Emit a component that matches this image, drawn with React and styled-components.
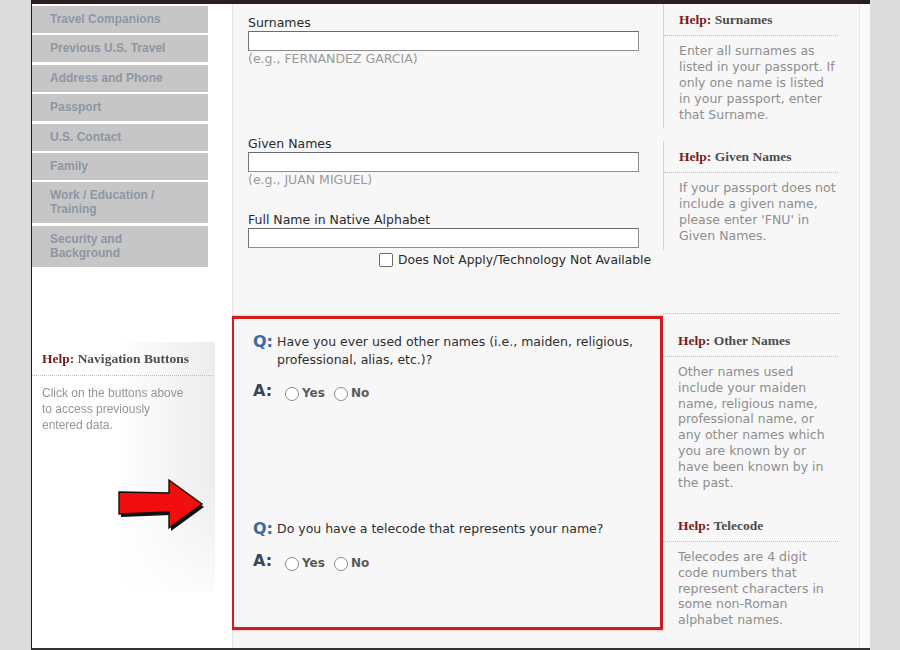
import styled, { createGlobalStyle } from 'styled-components'

const GlobalStyle = createGlobalStyle`
  html, body {
    margin: 0;
    padding: 0;
    background: #dcdcdc;
    height: 650px;
    overflow: hidden;
  }
  * { box-sizing: border-box; }
`

const Page = styled.div`
  position: relative;
  display: flex;
  width: 839px;
  height: 650px;
  margin-left: 31px;
  background: #fff;
  border-left: 1px solid #1a1a1a;
  border-top: 4px solid #2b1f1f;
  border-bottom: 2px solid #333;
`

const Sidebar = styled.aside`
  position: relative;
  width: 200px;
  flex-shrink: 0;
  padding-top: 2px;
  background: #fff;
`

const NavList = styled.nav`
  display: flex;
  flex-direction: column;
  gap: 2.4px;
  width: 176px;
`

const NavButton = styled.div`
  min-height: 27px;
  padding: 6px 10px 7px 18px;
  background: #c6c6c6;
  color: #8d97a5;
  font: bold 12px/14px "Liberation Sans", Arial, sans-serif;
`

const NavHelp = styled.div`
  width: 183px;
  height: 250px;
  margin-top: 75px;
  background: linear-gradient(90deg, rgba(255,255,255,1) 45%, rgba(236,236,236,1) 100%);
  -webkit-mask-image: linear-gradient(180deg, #000 55%, rgba(0,0,0,0.2) 100%);
`

const HelpTitle = styled.div`
  padding: ${p => p.$pad || '8px 0 7px 15px'};
  border-bottom: 1px dotted #bdbdbd;
  margin-right: 2px;
  font: bold 13.5px/16px "Liberation Serif", "Times New Roman", serif;
  color: #4d4d4d;
  white-space: nowrap;

  b { color: #7a1c1c; }
`

const NavHelpText = styled.div`
  padding: 9px 0 0 10px;
  font: 12px/16px "Liberation Sans", Arial, sans-serif;
  color: #959595;
`

const Arrow = styled.svg`
  position: absolute;
  left: 83px;
  top: 472px;
`

const Main = styled.main`
  width: 431px;
  flex-shrink: 0;
  background: #f7f7f7;
  border-left: 1px solid #e4e4e4;
  font-family: "DejaVu Sans", Verdana, sans-serif;
`

const NameSection = styled.section`
  height: 312px;
  padding: 11px 0 0 15px;
`

const Field = styled.div`
  margin-top: ${p => p.$mt || 0}px;
`

const Label = styled.label`
  display: block;
  font-size: 12.5px;
  line-height: 16px;
  color: #2a2a2a;
`

const TextInput = styled.input`
  display: block;
  width: 391px;
  height: 20px;
  margin: 0;
  border: 1px solid #8e8e8e;
  border-top-color: #6c6c6c;
  border-left-color: #767676;
  background: #fff;
`

const Hint = styled.div`
  font-size: 12.5px;
  line-height: 15px;
  color: #9a9a9a;
`

const CheckRow = styled.label`
  display: flex;
  align-items: center;
  gap: 5px;
  margin: 4px 0 0 131px;
  font-size: 12.3px;
  line-height: 16px;
  color: #2a2a2a;
  white-space: nowrap;
`

const CheckBox = styled.input`
  appearance: none;
  width: 14px;
  height: 14px;
  margin: 0;
  border: 1px solid #6a6a6a;
  border-radius: 2px;
  background: #fff;
`

const QuestionBox = styled.section`
  height: 314px;
  margin-left: -2px;
  padding: 15px 10px 0 19px;
  border: 3px solid #cf1c1c;
  box-shadow: 0 0 2px rgba(207, 28, 28, 0.5);
`

const QRow = styled.div`
  display: flex;
  margin-top: ${p => p.$mt || 0}px;
`

const QMark = styled.span`
  width: 24px;
  flex-shrink: 0;
  font-weight: bold;
  font-size: 16px;
  line-height: 16px;
  color: #3d6aa3;
`

const QText = styled.div`
  font-size: 12.5px;
  line-height: 18px;
  color: #2e2e2e;
  margin-top: -1px;
`

const ARow = styled.div`
  display: flex;
  align-items: center;
  height: 20px;
  margin-top: ${p => p.$mt || 0}px;
`

const AMark = styled.span`
  width: 32px;
  flex-shrink: 0;
  font-weight: bold;
  font-size: 16px;
  color: #3a4556;
  align-self: flex-start;
`

const Radio = styled.input`
  appearance: none;
  width: 14px;
  height: 14px;
  margin: 3px 3px 0 0;
  border: 1px solid #8a8a8a;
  border-radius: 50%;
  background: #fff;
`

const RadioLabel = styled.label`
  display: flex;
  align-items: center;
  margin-right: 9px;
  font-size: 12px;
  font-weight: bold;
  color: #5a5a5a;
  padding-top: 3px;
`

const HelpColumn = styled.aside`
  width: 177px;
  flex-shrink: 0;
  background: #f7f7f7;
  font-family: "DejaVu Sans", Verdana, sans-serif;
`

const HelpBox = styled.div`
  height: ${p => p.$h}px;
  margin-top: ${p => p.$mt || 0}px;
  border-left: ${p => (p.$line ? '1px solid #d4d4d4' : 'none')};
  border-top: ${p => (p.$dotted ? '1px dotted #c4c4c4' : 'none')};
`

const HelpText = styled.div`
  padding: 7px 0 0 15px;
  font-size: 12.5px;
  line-height: ${p => p.$lh || 16}px;
  color: #8e8e8e;
  white-space: nowrap;
`

const Edge = styled.div`
  flex: 1;
  background: linear-gradient(90deg, #f6f6f6 0 19px, #e6e6e6 19px 20px, #fbfbfb 20px);
`

const navItems = [
  'Travel Companions',
  'Previous U.S. Travel',
  'Address and Phone',
  'Passport',
  'U.S. Contact',
  'Family',
  ['Work / Education /', 'Training'],
  ['Security and', 'Background'],
]

function Lines({ lines }) {
  return lines.map((l, i) => (
    <span key={i}>
      {l}
      {i < lines.length - 1 && <br />}
    </span>
  ))
}

function Answer({ name, mt }) {
  return (
    <ARow $mt={mt}>
      <AMark>A:</AMark>
      <RadioLabel>
        <Radio type="radio" name={name} />
        Yes
      </RadioLabel>
      <RadioLabel>
        <Radio type="radio" name={name} />
        No
      </RadioLabel>
    </ARow>
  )
}

function Help({ title, pad }) {
  return (
    <HelpTitle $pad={pad}>
      <b>Help:</b> {title}
    </HelpTitle>
  )
}

export default function App() {
  return (
    <>
      <GlobalStyle />
      <Page>
        <Sidebar>
          <NavList>
            {navItems.map((item, i) => (
              <NavButton key={i}>
                {Array.isArray(item) ? <Lines lines={item} /> : item}
              </NavButton>
            ))}
          </NavList>
          <NavHelp>
            <Help title="Navigation Buttons" pad="9px 0 8px 10px" />
            <NavHelpText>
              <Lines lines={['Click on the buttons above', 'to access previously', 'entered data.']} />
            </NavHelpText>
          </NavHelp>
          <Arrow width="92" height="60" viewBox="0 0 92 60">
            <polygon
              points="4,16 54,17 54,4 87,28 54,52 54,36 4,38"
              fill="#111"
              transform="translate(2,3)"
            />
            <polygon
              points="4,16 54,17 54,4 87,28 54,52 54,36 4,38"
              fill="#f00e0e"
              stroke="#111"
              strokeWidth="1.4"
            />
          </Arrow>
        </Sidebar>

        <Main>
          <NameSection>
            <Field>
              <Label>Surnames</Label>
              <TextInput type="text" />
              <Hint>(e.g., FERNANDEZ GARCIA)</Hint>
            </Field>
            <Field $mt={70}>
              <Label>Given Names</Label>
              <TextInput type="text" />
              <Hint>(e.g., JUAN MIGUEL)</Hint>
            </Field>
            <Field $mt={25}>
              <Label>Full Name in Native Alphabet</Label>
              <TextInput type="text" />
              <CheckRow>
                <CheckBox type="checkbox" />
                Does Not Apply/Technology Not Available
              </CheckRow>
            </Field>
          </NameSection>

          <QuestionBox>
            <QRow>
              <QMark>Q:</QMark>
              <QText>
                <Lines lines={['Have you ever used other names (i.e., maiden, religious,', 'professional, alias, etc.)?']} />
              </QText>
            </QRow>
            <Answer name="other" mt={12} />
            <QRow $mt={120}>
              <QMark>Q:</QMark>
              <QText>Do you have a telecode that represents your name?</QText>
            </QRow>
            <Answer name="telecode" mt={13} />
          </QuestionBox>
        </Main>

        <HelpColumn>
          <HelpBox $h={124} $line>
            <Help title="Surnames" />
            <HelpText>
              <Lines
                lines={[
                  'Enter all surnames as',
                  'listed in your passport. If',
                  'only one name is listed',
                  'in your passport, enter',
                  'that Surname.',
                ]}
              />
            </HelpText>
          </HelpBox>
          <HelpBox $h={109} $mt={13} $line>
            <Help title="Given Names" />
            <HelpText>
              <Lines
                lines={[
                  'If your passport does not',
                  'include a given name,',
                  "please enter 'FNU' in",
                  'Given Names.',
                ]}
              />
            </HelpText>
          </HelpBox>
          <HelpBox $h={197} $mt={63} $dotted>
            <Help title="Other Names" pad="19px 0 7px 15px" />
            <HelpText $lh={15.8}>
              <Lines
                lines={[
                  'Other names used',
                  'include your maiden',
                  'name, religious name,',
                  'professional name, or',
                  'any other names which',
                  'you are known by or',
                  'have been known by in',
                  'the past.',
                ]}
              />
            </HelpText>
          </HelpBox>
          <HelpBox $h={120}>
            <Help title="Telecode" />
            <HelpText $lh={15.8}>
              <Lines
                lines={[
                  'Telecodes are 4 digit',
                  'code numbers that',
                  'represent characters in',
                  'some non-Roman',
                  'alphabet names.',
                ]}
              />
            </HelpText>
          </HelpBox>
        </HelpColumn>
        <Edge />
      </Page>
    </>
  )
}
